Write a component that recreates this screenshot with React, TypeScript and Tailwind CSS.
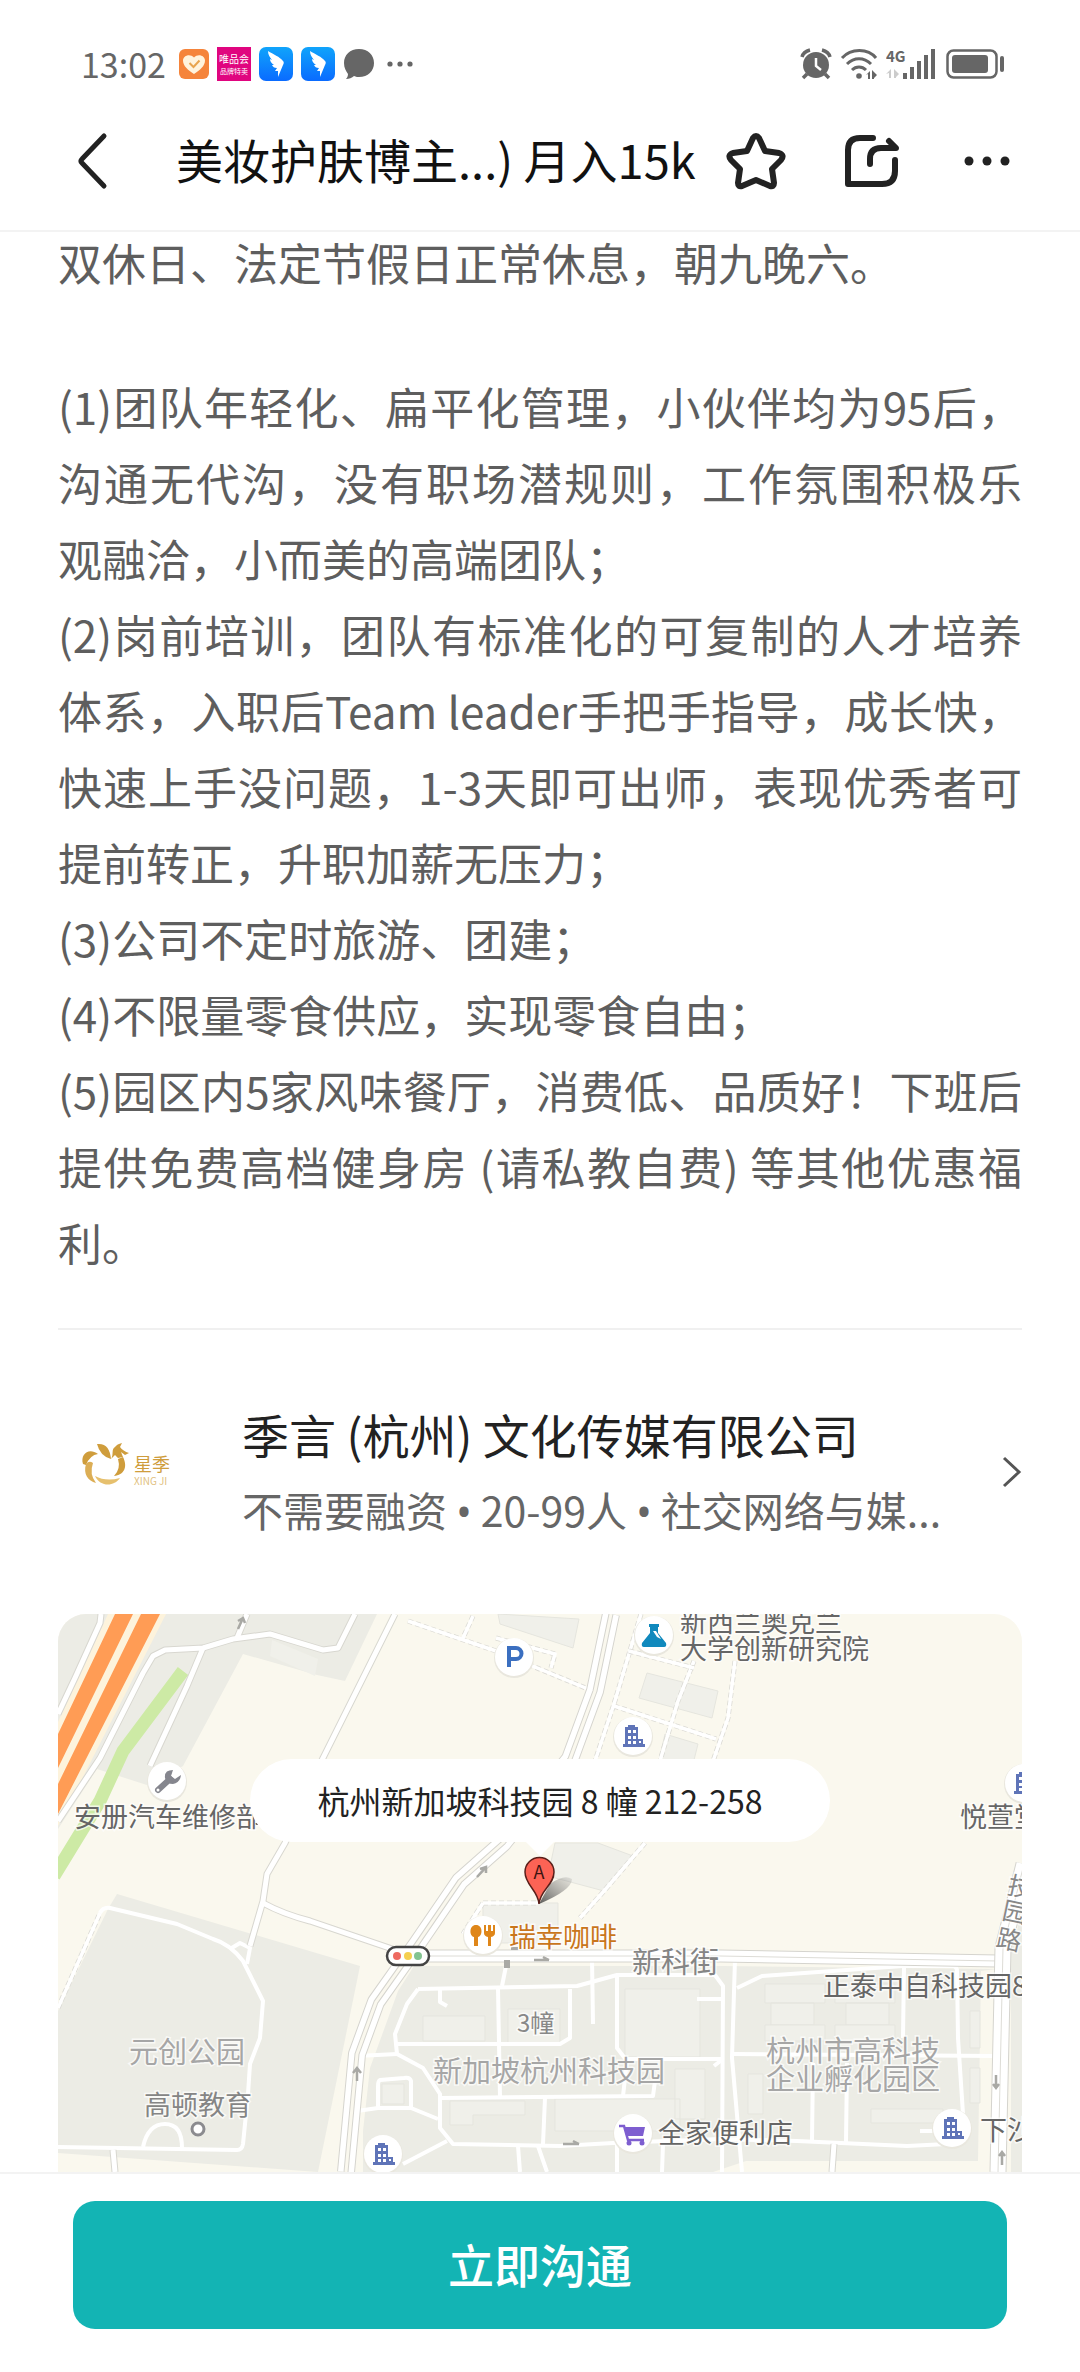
import { ReactNode } from "react";

const paragraphs = [
  "(1)团队年轻化、扁平化管理，小伙伴均为95后，沟通无代沟，没有职场潜规则，工作氛围积极乐观融洽，小而美的高端团队；",
  "(2)岗前培训，团队有标准化的可复制的人才培养体系，入职后Team leader手把手指导，成长快，快速上手没问题，1-3天即可出师，表现优秀者可提前转正，升职加薪无压力；",
  "(3)公司不定时旅游、团建；",
  "(4)不限量零食供应，实现零食自由；",
  "(5)园区内5家风味餐厅，消费低、品质好！下班后提供免费高档健身房 (请私教自费) 等其他优惠福利。",
];

const WingIcon = () => (
  <svg viewBox="0 0 34 34" className="size-[34px]">
    <defs>
      <linearGradient id="wing" x1="0" y1="0" x2="0" y2="1">
        <stop offset="0" stopColor="#10a4fb" />
        <stop offset="1" stopColor="#0a6bff" />
      </linearGradient>
    </defs>
    <rect width="34" height="34" rx="7" fill="url(#wing)" />
    <path
      d="M9 4c5 3 12 6 15 10 1 1 1 2 0 4l-5 12 0-6h-3l2-3c-3 0-4-1-5-3l2 0c-3-2-4-4-4-6l2 1c-2-3-4-5-4-9z"
      fill="#fff"
    />
  </svg>
);

const StatusBar = () => (
  <div className="flex h-24 items-center justify-between pt-8 pr-[76px] pl-[81px] text-[#666]">
    <div className="flex items-center">
      <span className="mr-[13px] text-[34px] leading-none">13:02</span>
      <div className="flex items-center gap-2">
        <svg viewBox="0 0 30 30" className="size-[30px]">
          <rect width="30" height="30" rx="6" fill="#f5843b" />
          <path
            d="M15 25C9 21 4 17 4 11.500c0-5 7-7.500 11-3 4-4.500 11-2 11 3C26 17 21 21 15 25z"
            fill="#fff3dd"
          />
          <path
            d="M10.500 14l4 4 6-6.500"
            fill="none"
            stroke="#e8a44e"
            strokeWidth="2"
          />
        </svg>
        <div className="flex size-[34px] flex-col items-center justify-center bg-[#e0057f] text-white">
          <span className="text-[10px] leading-[14px]">唯品会</span>
          <span className="text-[7px] leading-[10px]">品牌特卖</span>
        </div>
        <WingIcon />
        <WingIcon />
        <svg viewBox="0 0 32 32" className="size-8" fill="#666">
          <path d="M16 1C7 1 1 7 1 15c0 5 2 8 4 11 0 2-1 4-2 5 3 0 6-1 8-3 2 1 4 1 5 1 9 0 15-6 15-14S25 1 16 1z" />
        </svg>
        <svg viewBox="0 0 26 8" className="ml-1 h-2 w-[26px]" fill="#666">
          <circle cx="3" cy="4" r="2.600" />
          <circle cx="13" cy="4" r="2.600" />
          <circle cx="23" cy="4" r="2.600" />
        </svg>
      </div>
    </div>
    <div className="flex items-center gap-2">
      {/* Alarm */}
      <svg viewBox="0 0 32 32" className="size-8" fill="#666">
        <circle cx="16" cy="17" r="13" />
        <path
          d="M2 9c1-4 4-6 8-7M30 9c-1-4-4-6-8-7M7 26l-4 4M25 26l4 4"
          fill="none"
          stroke="#666"
          strokeWidth="3.500"
        />
        <path d="M16 10v8l5 4" fill="none" stroke="#fff" strokeWidth="2.500" />
      </svg>
      {/* Wifi */}
      <svg
        viewBox="0 0 38 32"
        className="h-8 w-[38px]"
        fill="none"
        stroke="#666"
        strokeWidth="3"
      >
        <path d="M2 10c9-10 26-10 34 0M7 16c7-7 17-7 24 0M12 22c4-4 10-4 14 0" />
        <circle cx="19" cy="28" r="2.800" fill="#666" stroke="none" />
        <path
          d="M26 27l4-4v8h-2v-5zM32 22l5 5-3 3v1h-2z"
          fill="#666"
          stroke="none"
        />
      </svg>
      {/* Signal */}
      <svg viewBox="0 0 52 32" className="h-8 w-[52px]" fill="#666">
        <text x="0" y="14" fontSize="15" fontWeight="700">
          4G
        </text>
        <path d="M0 26l5-5v9H3v-5zM8 21l5 5-3 3v1H8z" fill="#ccc" />
        <path d="M17 25h4v6h-4zM24 19h4v12h-4zM31 13h4v18h-4zM38 7h4v24h-4zM45 1h4v30h-4z" />
      </svg>
      {/* Battery */}
      <svg viewBox="0 0 58 32" className="h-8 w-[58px]" fill="#666">
        <rect
          x="1.500"
          y="2.500"
          width="49"
          height="27"
          rx="6"
          fill="none"
          stroke="#666"
          strokeWidth="2.500"
        />
        <rect x="6" y="7" width="36" height="18" rx="3" />
        <rect x="54" y="8" width="4" height="16" rx="2" />
      </svg>
    </div>
  </div>
);

const NavBar = () => (
  <nav className="flex h-[136px] items-center border-b-2 border-[#f3f3f3] pr-[70px] pb-1 pl-[70px] text-[#222]">
    <button aria-label="返回" className="mr-[62px]">
      <svg
        viewBox="0 0 44 60"
        className="h-15 w-11"
        fill="none"
        stroke="currentColor"
        strokeWidth="5"
        strokeLinecap="round"
        strokeLinejoin="round"
      >
        <path d="M34 5L12 28q-2 2 0 4L34 55" />
      </svg>
    </button>
    <h1 className="flex-1 pb-1 text-[47px] leading-[64px] whitespace-nowrap text-[#111]">
      美妆护肤博主...) 月入15k
    </h1>
    <div className="flex items-center">
      <button aria-label="收藏">
        <svg
          viewBox="0 0 64 64"
          className="size-16"
          fill="none"
          stroke="currentColor"
          strokeWidth="6"
          strokeLinejoin="round"
        >
          <path d="M29 9Q32 5 35 9L41 22L55 24Q61 26 57 31L48 40L50 54Q50 58 46 57L32 51L18 57Q14 58 14 54L16 40L7 31Q3 26 9 24L23 22z" />
        </svg>
      </button>
      <button aria-label="分享" className="ml-[54px]">
        <svg
          viewBox="0 0 60 60"
          className="size-15"
          fill="none"
          stroke="currentColor"
          strokeWidth="6"
          strokeLinecap="round"
          strokeLinejoin="round"
        >
          <path d="M31 7H18Q6 7 6 19V53H40Q53 53 53 40V29" />
          <path d="M28 33V28Q28 17 39 17H54L47 10" />
        </svg>
      </button>
      <button aria-label="更多" className="ml-[62px]">
        <svg viewBox="0 0 46 12" className="h-3 w-[46px]" fill="currentColor">
          <circle cx="5" cy="6" r="4.500" />
          <circle cx="23" cy="6" r="4.500" />
          <circle cx="41" cy="6" r="4.500" />
        </svg>
      </button>
    </div>
  </nav>
);

const CompanyLogo = () => (
  <svg viewBox="0 0 92 64" className="mx-[22px] h-16 w-[92px]" fill="#cf9d3c">
    <path d="M3 24C0 14 9 7 18 14Q10 15 6 25z" />
    <path d="M17 4C26 3 30 9 31 19Q20 16 17 4z" />
    <path d="M31 19C34 15 31 9 35 7Q37 4 42 3L40 7Q43 11 49 13L45 15L41 12L43 17L38 18L35 15z" />
    <path d="M6 24C3 34 8 41 16 43Q9 34 13 23Q9 20 6 24z" fill="#dcae55" />
    <path d="M43 17C48 27 44 35 34 36Q41 29 38 19z" />
    <path d="M15 36C20 47 34 47 40 38Q26 42 15 36z" fill="#e6c06e" />
    <text x="54" y="31" fontSize="18">
      星季
    </text>
    <text x="54" y="45" fontSize="10" fill="#dfbf80">
      XING JI
    </text>
  </svg>
);

// Roads inside the campus blocks
const innerRoads = [
  "M360 375L519 372L559 361H657L665 372L664 558",
  "M360 375L349 390L337 420L339 440L365 454L382 480V514L395 530L502 532L555 529L662 525L739 527L849 532L889 530",
  "M339 430H502L512 424V375",
  "M440 374L442 484M382 375V388L389 392M449 347L444 372",
  "M534 344L535 410",
  "M559 361V434L569 447L565 482",
  "M569 445H664M382 484L595 482L597 467",
  "M487 484L485 530M299 442L339 440",
  "M299 497L320 494H353V467Q352 463 346 464L322 466Q320 467 320 472V494M353 494L380 505",
  "M389 527L345 550M460 532L462 558M480 532L489 558M559 530V558M605 530L604 558M639 385H665",
  "M677 345L674 444L684 558",
  "M679 374L704 362L845 352H895Q899 352 899 358L900 424L905 500",
  "M846 352L845 424M674 440L939 442M755 449L754 527M789 449L788 529M862 517H875M656 452L665 445",
  "M0 533L179 536Q184 536 185 530L190 480L192 450L202 424L205 387L185 347Q172 330 155 325L119 310L52 294Q45 293 42 299",
  "M85 533Q90 510 107 510T124 534M172 335L182 329L192 334L189 350",
];

const casedRoads = [
  "M43 0L42 9L17 64L0 100",
  "M0 207L42 144L85 59L95 42L107 36L145 34L175 25L212 20L265 36L280 34L297 0",
  "M145 34L129 72L92 152",
  "M189 0L179 24",
  "M337 0L265 144L227 229L209 260L205 287L192 332",
  "M205 289Q225 300 252 307L349 340",
  "M55 536L57 558M776 530L774 558",
];

// Footpaths drawn with a dashed edge
const footpaths = [
  "M583 0L556 90L536 150M556 92L658 125M677 47L670 104L654 150M636 47L620 87L601 150",
  "M571 37L636 54M350 7L438 37L530 75M415 2L405 24M438 24L497 40L493 54",
  "M587 229L546 277L522 304M425 289H480M425 289L405 320M0 394L42 299",
];

const mainRoad =
  "M553 0L537 77L512 145L445 229L402 267L359 330L318 388L299 440L288 558";

const Pin = ({
  x,
  y,
  children,
}: {
  x: number;
  y: number;
  children?: ReactNode;
}) => (
  <g transform={`translate(${x} ${y})`}>
    <circle r="20" cy="1" fill="#e9e7de" />
    <circle r="19" fill="#fff" />
    {children}
  </g>
);

const Building = () => (
  <>
    <path d="M-8 8V-9h3v-2h7v2h3V3h5v5h2v3h-22V8z" fill="#5f74b8" />
    <path
      d="M-5-6h3v3h-3zM0-6h3v3H0zM-5 0h3v3h-3zM0 0h3v3H0zM-5 5h3v3h-3zM0 5h3v3H0zM6 5h2v2H6z"
      fill="#fff"
    />
  </>
);

const MapArt = () => (
  <svg
    viewBox="0 0 964 558"
    preserveAspectRatio="xMidYMid slice"
    className="h-full w-full"
    fill="none"
  >
    <rect width="964" height="558" fill="#faf8ee" />
    {/* Blocks */}
    <g fill="#ecece5">
      <path d="M0 0H319L287 67L259 61L185 40L177 55L125 152L92 172L39 155L0 215z" />
      <path d="M59 280L302 352L260 558L0 539V397L50 295z" />
      <path d="M372 352L664 352L938 355L923 357L920 547L688 547L655 558H305L305 517L312 454L340 377L356 352z" />
      <path d="M953 334L964 300V558H953z" />
    </g>
    <g fill="#f0f0ea" stroke="#e5e5de">
      <path d="M214 26L260 45L257 62L212 42z" stroke="none" />
      <path d="M365 402h62v25h-62zM450 395h52v34h-52zM567 375h75v68h-75zM392 487h75v14h-52v10h-23z" />
      <path d="M497 485h125v32H497zM617 455h30v50h-30zM707 370h60v19h-60zM713 389h43v22h-43zM777 370h60v19h-60zM788 389h43v22h-43z" />
      <path d="M707 411h60v16h-60zM777 411h60v16h-60zM912 397h10v37h-10zM912 454h10v35h-10zM813 495h72v14h-72zM324 470h22v20h-22zM690 460h15v40h-15z" />
      <path d="M589 59L660 77L654 104L581 84zM607 120L640 130L635 150H600zM440 0L521 5L515 34L442 10zM497 229H540L575 242L546 277L490 262z" />
      <path d="M425 289h75v40h-75z" />
    </g>
    {/* Highway and green belt */}
    <path d="M50 0H108L0 212V108z" fill="#fdf3dc" />
    <path d="M57 0H75L0 154V120zM83 0H102L0 200V170z" fill="#ff9c55" />
    <path d="M125 57L65 137L42 187L-4 262" stroke="#cdeaa5" strokeWidth="13" />
    {/* Roads */}
    <g strokeLinejoin="round">
      {footpaths.map((d) => (
        <g key={d}>
          <path d={d} stroke="#dad9d3" strokeWidth="5" strokeDasharray="5 3" />
          <path d={d} stroke="#fff" strokeWidth="3.500" />
        </g>
      ))}
      {innerRoads.map((d) => (
        <path key={d} d={d} stroke="#fff" strokeWidth="4" />
      ))}
      {casedRoads.map((d) => (
        <path key={d} d={d} stroke="#d8d7d0" strokeWidth="7" />
      ))}
      {casedRoads.map((d) => (
        <path key={d} d={d} stroke="#fff" strokeWidth="5" />
      ))}
      <path d={mainRoad} stroke="#d5d4ce" strokeWidth="18" />
      <path d={mainRoad} stroke="#fff" strokeWidth="16" />
      <path d={mainRoad} stroke="#d5d4ce" strokeWidth="5" />
      <path d={mainRoad} stroke="#faf8ee" strokeWidth="3" />
      <path d="M355 342H662L940 347" stroke="#d5d4ce" strokeWidth="13" />
      <path d="M355 342H662L940 347" stroke="#fff" strokeWidth="11" />
      <path d="M372 342H662L940 347" stroke="#dddcd6" />
      <path d="M966 250L945 334L940 558" stroke="#d5d4ce" strokeWidth="17" />
      <path d="M966 250L945 334L940 558" stroke="#fff" strokeWidth="15" />
      <path d="M966 250L945 334L940 558" stroke="#dddcd6" />
    </g>
    {/* Direction arrows */}
    <path
      d="M180 15L185 4M180 7L185 4L187 9M476 346H491M485 343L491 346M505 530H521M515 527L521 530M419 263L428 253M422 255L428 253L428 259M299 467V454M295 459L299 454L303 459M938 461V474M935 470L938 474L941 470M944 551V538M941 542L944 538L947 542"
      stroke="#a9a9a5"
      strokeWidth="2.500"
    />
    <path d="M453 333h7v3h-7zM446 346h6v8h-6z" fill="#a9a9a5" />
    {/* Labels */}
    <g
      fill="#666"
      fontSize="27"
      stroke="#fff"
      strokeOpacity="0.7"
      strokeWidth="3"
      paintOrder="stroke"
    >
      <text x="16" y="213">安册汽车维修部</text>
      <text x="622" y="18">新西兰奥克兰</text>
      <text x="622" y="45">大学创新研究院</text>
      <text x="902" y="213">悦萱堂</text>
      <text x="451" y="333" fill="#c9761c">瑞幸咖啡</text>
      <text x="574" y="359" fontSize="29" fill="#858585">新科街</text>
      <text x="765" y="382">正泰中自科技园8</text>
      <text x="600" y="529">全家便利店</text>
      <text x="922" y="526">下沙</text>
      <text x="86" y="501" fill="#858585">高顿教育</text>
      <text x="459" y="418" fontSize="24" fill="#888">3幢</text>
      <g fontSize="25" fill="#888" transform="rotate(12 950 300)">
        <text x="944" y="280">技</text>
        <text x="944" y="306">园</text>
        <text x="944" y="334">路</text>
      </g>
      <g fontSize="29" fill="#a6a6a6">
        <text x="71" y="449">元创公园</text>
        <text x="375" y="468">新加坡杭州科技园</text>
        <text x="708" y="448">杭州市高科技</text>
        <text x="708" y="476">企业孵化园区</text>
      </g>
    </g>
    <circle
      cx="140"
      cy="515"
      r="6"
      fill="#fff"
      stroke="#8b8b8f"
      strokeWidth="3"
    />
    {/* Places */}
    <Pin x={456} y={43}>
      <path d="M-5 10V-9H2a5 5 0 0 1 0 11H-5" stroke="#3b6fc0" strokeWidth="4" />
    </Pin>
    <Pin x={596} y={21}>
      <path
        d="M-5-11H5v3H4v6l8 10q1 4-2 4h-20q-3 0-2-4l8-10v-6h-1z"
        fill="#1089bd"
      />
      <path d="M-1-4h3l5 8-4-2z" fill="#fff" />
    </Pin>
    <Pin x={575} y={122}><Building /></Pin>
    <Pin x={966} y={169}><Building /></Pin>
    <Pin x={894} y={514}><Building /></Pin>
    <Pin x={325} y={540}><Building /></Pin>
    <Pin x={109} y={167}>
      <path d="M-9 9L3-2" stroke="#85868e" strokeWidth="6" strokeLinecap="round" />
      <path d="M6-11q-9 0-8 8 2 6 8 6 7-1 8-9l-6 4-4-3z" fill="#85868e" />
      <circle cx="-9" cy="9" r="1.500" fill="#fff" />
    </Pin>
    <Pin x={425} y={321}>
      <path
        d="M-7-10c-7 0-7 11-2 12v9h4V2c5-1 5-12-2-12zM1-10v8q0 3 4 4v9h3V2q4-1 4-4v-8h-2v6H8v-6H5v6H3v-6z"
        fill="#df8619"
      />
    </Pin>
    <Pin x={575} y={519}>
      <path d="M-14-7h5L-5 7h16" stroke="#7e5ed0" strokeWidth="2.500" />
      <path d="M-9-6h21l-2 9H-6z" fill="#7e5ed0" />
      <circle cx="-4" cy="10" r="2.500" fill="#7e5ed0" />
      <circle cx="9" cy="10" r="2.500" fill="#7e5ed0" />
    </Pin>
    {/* Traffic light */}
    <rect
      x="329"
      y="333"
      width="42"
      height="18"
      rx="9"
      fill="#fff"
      stroke="#444"
      strokeWidth="2.500"
    />
    <circle cx="339" cy="342" r="4" fill="#ee6a61" />
    <circle cx="350" cy="342" r="4" fill="#f5cf50" />
    <circle cx="360" cy="342" r="4" fill="#83c391" />
    {/* Marker */}
    <defs>
      <linearGradient id="shade" x1="0" y1="1" x2="1" y2="0">
        <stop offset="0" stopColor="#333" stopOpacity="0.800" />
        <stop offset="1" stopColor="#777" stopOpacity="0.150" />
      </linearGradient>
    </defs>
    <path d="M481 290L492 270Q506 260 514 265Q514 276 481 290z" fill="url(#shade)" />
    <path
      d="M481 290C480 276 467 271 467 258a14.500 14.500 0 0 1 29 0C496 271 482 276 481 290z"
      fill="#fc6355"
      stroke="#5a1f1a"
      strokeWidth="1.500"
    />
    <text x="481" y="265" fontSize="18" textAnchor="middle" fill="#3b1310">
      A
    </text>
  </svg>
);

const Bullet = () => <span className="font-['Noto_Sans']">•</span>;

const App = () => {
  return (
    <div
      lang="zh-CN"
      className="flex min-h-screen flex-col bg-white font-['Noto_Sans_CJK_SC',sans-serif]"
    >
      <header>
        <StatusBar />
        <NavBar />
      </header>
      <main className="flex-1 px-[58px]">
        {/* Description */}
        <section className="border-b-2 border-[#f0f0f0] pb-12 text-justify text-[44px] leading-[76px] text-[#5e5e5e]">
          <p className="mb-[76px] leading-[60px]">
            双休日、法定节假日正常休息，朝九晚六。
          </p>
          {paragraphs.map((text) => (
            <p key={text}>{text}</p>
          ))}
        </section>
        {/* Company */}
        <a href="#company" className="flex items-center py-[66px]">
          <CompanyLogo />
          <div className="ml-12 flex-1">
            <h2 className="text-[47px] leading-[76px] whitespace-nowrap text-[#222]">
              季言 (杭州) 文化传媒有限公司
            </h2>
            <p className="text-[41px] leading-[74px] whitespace-nowrap text-[#666]">
              不需要融资 <Bullet /> 20-99人 <Bullet /> 社交网络与媒...
            </p>
          </div>
          <svg
            viewBox="0 0 20 34"
            className="h-[34px] w-5"
            fill="none"
            stroke="#555"
            strokeWidth="3"
          >
            <path d="M2 3L17 17L2 31" />
          </svg>
        </a>
        {/* Map */}
        <section className="relative h-[558px] overflow-hidden rounded-t-[28px]">
          <MapArt />
          <div className="absolute inset-x-0 top-[145px] flex flex-col items-center">
            <p className="rounded-full bg-white px-[68px] text-[32px] leading-[83px] whitespace-nowrap text-[#222]">
              杭州新加坡科技园 8 幢 212-258
            </p>
            <div className="border-x-[14px] border-t-[14px] border-x-transparent border-t-white" />
          </div>
        </section>
      </main>
      <footer className="border-t-2 border-[#f3f3f3] px-[73px] pt-[27px] pb-11">
        <button className="block h-32 w-full rounded-[22px] bg-[#13b4b4] pb-1 text-[46px] font-medium text-white">
          立即沟通
        </button>
      </footer>
    </div>
  );
};

export default App;
